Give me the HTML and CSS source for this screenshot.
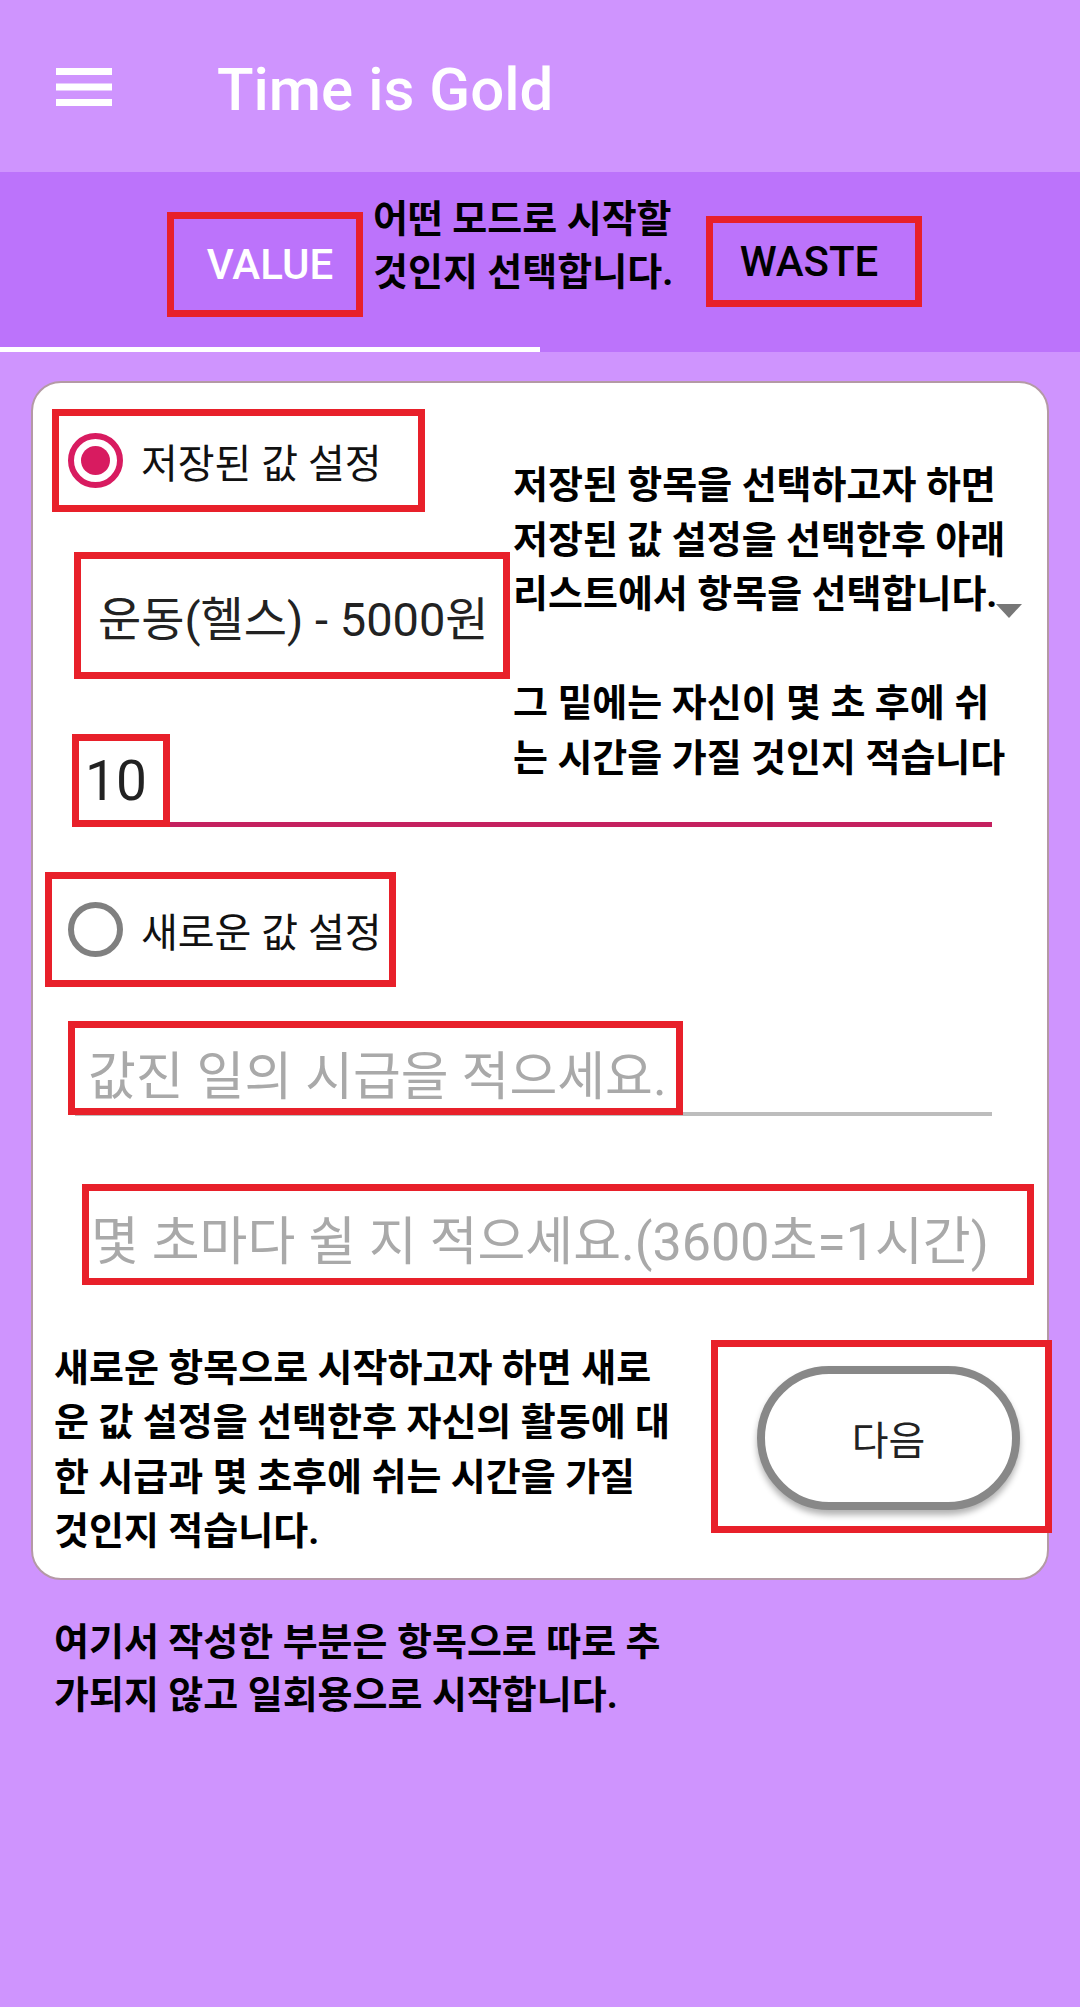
FILE: index.html
```html
<!DOCTYPE html>
<html lang="ko">
<head>
<meta charset="utf-8">
<title>Time is Gold</title>
<link rel="stylesheet" href="styles.css">
</head>
<body>
<div class="screen">
  <header class="appbar">
    <svg class="menu" width="56" height="38" viewBox="0 0 56 38" aria-hidden="true">
      <rect x="0" y="0" width="56" height="7"/>
      <rect x="0" y="15.5" width="56" height="7"/>
      <rect x="0" y="31" width="56" height="7"/>
    </svg>
    <h1 class="title">Time is Gold</h1>
  </header>

  <nav class="tabbar">
    <div class="tabs">
      <div class="tab"><span class="mark tab-value">VALUE</span></div>
      <div class="tab"><span class="mark tab-waste">WASTE</span></div>
    </div>
    <div class="indicator"></div>
    <p class="annot annot-tab">어떤 모드로 시작할<br>것인지 선택합니다.</p>
  </nav>

  <main class="content">
    <section class="card">
      <label class="mark radio radio-saved">
        <svg class="radio-icon" width="55" height="55" viewBox="0 0 55 55" aria-hidden="true">
          <circle cx="27.5" cy="27.5" r="24.5" fill="none" stroke="#d81b60" stroke-width="6"/>
          <circle cx="27.5" cy="27.5" r="14.5" fill="#d81b60"/>
        </svg>
        <span>저장된 값 설정</span>
      </label>

      <div class="spinner">
        <div class="mark spinner-box">운동(헬스) - 5000원</div>
        <span class="arrow"></span>
      </div>

      <div class="edit edit-num">
        <div class="mark num-box">10</div>
      </div>

      <label class="mark radio radio-new">
        <svg class="radio-icon" width="55" height="55" viewBox="0 0 55 55" aria-hidden="true">
          <circle cx="27.5" cy="27.5" r="24.5" fill="none" stroke="#808080" stroke-width="6"/>
        </svg>
        <span>새로운 값 설정</span>
      </label>

      <div class="edit edit-hint">
        <div class="mark hint-box1">값진 일의 시급을 적으세요.</div>
      </div>

      <div class="mark hint-box2">몇 초마다 쉴 지 적으세요.(3600초=1시간)</div>

      <div class="bottom-row">
        <p class="annot annot-new">새로운 항목으로 시작하고자 하면 새로<br>운 값 설정을 선택한후 자신의 활동에 대<br>한 시급과 몇 초후에 쉬는 시간을 가질<br>것인지 적습니다.</p>
        <div class="mark btn-box"><button class="next" type="button">다음</button></div>
      </div>

      <p class="annot annot-saved">저장된 항목을 선택하고자 하면<br>저장된 값 설정을 선택한후 아래<br>리스트에서 항목을 선택합니다.<br>&nbsp;<br>그 밑에는 자신이 몇 초 후에 쉬<br>는 시간을 가질 것인지 적습니다</p>
    </section>

    <p class="annot annot-note">여기서 작성한 부분은 항목으로 따로 추<br>가되지 않고 일회용으로 시작합니다.</p>
  </main>
</div>
</body>
</html>
```

FILE: styles.css
```css
* { box-sizing: border-box; }

html, body {
  margin: 0;
  padding: 0;
}

body {
  width: 1080px;
  min-height: 2007px;
  background: #cf94fe;
  font-family: Roboto, "Noto Sans CJK KR", sans-serif;
  color: #000;
}

.screen {
  width: 1080px;
  min-height: 2007px;
  background: #cf94fe;
}

/* App bar */
.appbar {
  height: 172px;
  display: flex;
  align-items: center;
  padding-left: 56px;
  background: #cf94fe;
}

.menu {
  flex: none;
  fill: #fff;
  margin-top: 2px;
}

.title {
  margin: 8px 0 0 105px;
  font-size: 60px;
  font-weight: 500;
  line-height: 1;
  color: #fff;
}

/* Tabs */
.tabbar {
  position: relative;
  height: 180px;
  background: #bc73fb;
  display: flex;
  flex-direction: column;
}

.tabs {
  flex: 1;
  display: flex;
}

.tab {
  flex: 1;
  display: flex;
  align-items: center;
  justify-content: center;
}

.mark {
  border: 7px solid #e8202a;
}

.tab-value,
.tab-waste {
  display: flex;
  align-items: center;
  justify-content: center;
  font-size: 42px;
  font-weight: 500;
  line-height: 1;
}

.tab-value {
  width: 196px;
  height: 105px;
  padding-left: 10px;
  margin: 10px 10px 0 0;
  color: #fff;
}

.tab-waste {
  width: 216px;
  height: 91px;
  padding-right: 10px;
  margin: 4px 0 0 8px;
  color: #000;
}

.indicator {
  width: 540px;
  height: 5px;
  background: #fff;
}

/* Annotations */
.annot {
  margin: 0;
  font-size: 38px;
  font-weight: 700;
  white-space: nowrap;
  color: #000;
}

.annot-tab {
  position: absolute;
  left: 373px;
  top: 21px;
  line-height: 53px;
}

/* Content */
.content {
  padding: 29px 31px 0;
}

.card {
  position: relative;
  background: #fff;
  border: 2px solid #b49aa5;
  border-radius: 30px;
  padding: 26px 0 20px;
  display: flex;
  flex-direction: column;
  align-items: flex-start;
}

.radio {
  display: flex;
  align-items: center;
  gap: 18px;
  font-size: 40px;
  color: #111;
}

.radio-icon { flex: none; }

.radio-saved {
  width: 373px;
  height: 103px;
  margin-left: 19px;
  padding-left: 9px;
}

.radio-new {
  width: 351px;
  height: 115px;
  margin: 45px 0 0 12px;
  padding-left: 16px;
}

.spinner {
  margin-top: 40px;
  width: 100%;
  height: 127px;
  display: flex;
  align-items: center;
  justify-content: space-between;
  padding: 0 25px 0 41px;
}

.spinner-box {
  width: 436px;
  height: 127px;
  display: flex;
  align-items: center;
  padding-left: 17px;
  font-size: 47px;
  color: #222;
  white-space: nowrap;
}

.arrow {
  width: 0;
  height: 0;
  border-left: 13.5px solid transparent;
  border-right: 13.5px solid transparent;
  border-top: 14px solid #777;
  margin-bottom: 9px;
}

.edit {
  width: 917px;
  margin-left: 42px;
}

.edit-num {
  margin-top: 55px;
  border-bottom: 5px solid #c4215f;
}

.num-box {
  width: 98px;
  height: 93px;
  margin: 0 0 -5px -3px;
  display: flex;
  align-items: center;
  padding-left: 6px;
  font-size: 55px;
  color: #222;
}

.edit-hint {
  margin-top: 34px;
  border-bottom: 4px solid #bdbdbd;
}

.hint-box1 {
  width: 615px;
  height: 94px;
  margin: 0 0 -3px -7px;
  display: flex;
  align-items: center;
  padding: 8px 0 0 13px;
  font-size: 52px;
  color: #a9a9a9;
  white-space: nowrap;
}

.hint-box2 {
  width: 952px;
  height: 101px;
  margin: 68px 0 0 49px;
  display: flex;
  align-items: center;
  padding: 6px 0 0 2px;
  font-size: 52px;
  color: #a9a9a9;
  white-space: nowrap;
}

.bottom-row {
  margin-top: 55px;
  width: 100%;
  display: flex;
  align-items: flex-start;
  justify-content: space-between;
  padding-left: 21px;
}

.annot-new {
  margin-top: 1px;
  line-height: 54.3px;
}

.btn-box {
  width: 341px;
  height: 193px;
  margin-right: -5px;
  padding: 19px 0 0 39px;
  flex: none;
}

.next {
  width: 263px;
  height: 144px;
  border: 8px solid #888;
  border-radius: 72px;
  background: #fff;
  box-shadow: 0 5px 6px rgba(0, 0, 0, 0.3);
  font-family: Roboto, "Noto Sans CJK KR", sans-serif;
  font-size: 40px;
  color: #222;
  padding: 0;
}

.annot-saved {
  position: absolute;
  left: 480px;
  top: 75px;
  line-height: 54.5px;
}

.annot-note {
  margin: 36px 0 0 23px;
  line-height: 53px;
}
```
